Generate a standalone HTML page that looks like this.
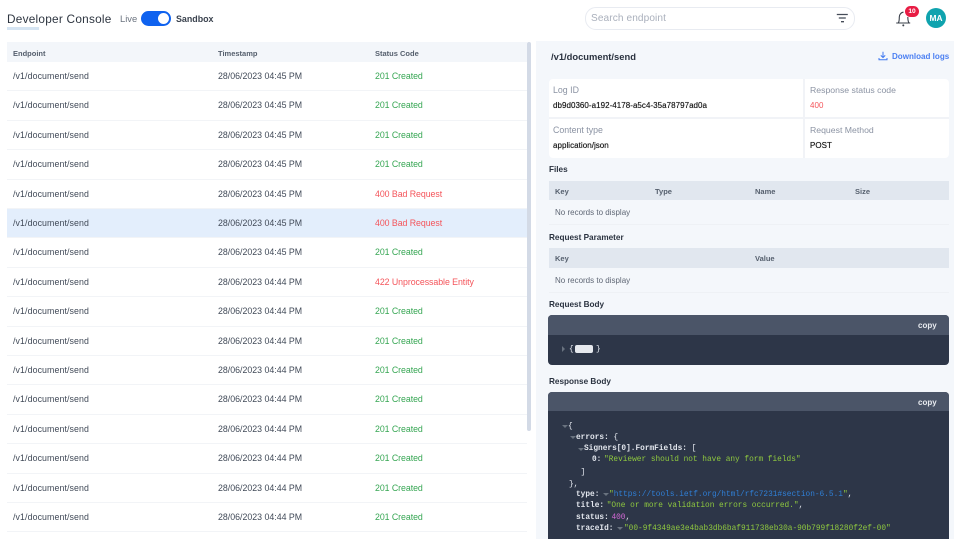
<!DOCTYPE html>
<html><head><meta charset="utf-8"><style>
html,body{margin:0;padding:0;width:954px;height:539px;overflow:hidden;background:#fff}
body{font-family:"Liberation Sans",sans-serif;position:relative;color:#333}
#w{position:absolute;left:0;top:0;width:954px;height:539px;overflow:hidden;filter:blur(.25px)}
.a,.t{position:absolute;white-space:nowrap}
.t{line-height:12px;height:12px}
.row{position:absolute;left:7px;width:520px;height:29.4px;border-bottom:1px solid #f2f4f7;box-sizing:border-box}
.row span{position:absolute;top:8.1px;line-height:12px;font-size:8.8px;color:#414a58;white-space:nowrap}
.row .e{left:6px;letter-spacing:.1px}.row .d{left:211px}.row .s{left:368px;letter-spacing:-.06px}
.g{color:#36a653!important}.r{color:#f4545a!important}
.h{font-size:7.5px;font-weight:bold;color:#555f6d}
.l{font-size:8.8px;color:#8b93a3}
.v{font-size:8px;color:#222;letter-spacing:.04px;text-shadow:0 0 .4px #222}
.sec{font-size:8.2px;font-weight:bold;color:#2b3340}
.c{font-family:"Liberation Mono",monospace;font-size:7.8px;line-height:11px;height:11px;color:#e5e9f0;position:absolute;white-space:nowrap}
.k{color:#e3e7ee;font-weight:bold}.str{color:#8fc93f;font-weight:normal}.u{color:#2f7fd6}.n{color:#d36ad6;font-weight:normal}
.p{font-weight:normal}.m{margin-left:-2px}
.tri{position:absolute;width:0;height:0;border-left:3px solid transparent;border-right:3px solid transparent;border-top:3px solid #69727f}
</style></head><body><div id="w">

<div class="t" style="left:7px;top:12.5px;font-size:11.8px;color:#2d3540;letter-spacing:.25px">Developer Console</div>
<div class="a" style="left:7px;top:27px;width:32px;height:3px;background:#d5e4f2"></div>
<div class="t" style="left:120px;top:12.5px;font-size:9.4px;color:#6c7480">Live</div>
<div class="a" style="left:141px;top:11px;width:30px;height:15px;border-radius:8px;background:#0f62ef"></div>
<div class="a" style="left:158px;top:13px;width:11px;height:11px;border-radius:50%;background:#fff"></div>
<div class="t" style="left:176px;top:12.5px;font-size:8.9px;font-weight:bold;color:#3a424e">Sandbox</div>

<div class="a" style="left:585px;top:7px;width:268px;height:21px;border:1px solid #e8ebf1;border-radius:11px;box-sizing:content-box"></div>
<div class="t" style="left:591px;top:13px;font-size:10.1px;color:#aab0bc;letter-spacing:.1px">Search endpoint</div>
<svg class="a" style="left:836px;top:13px" width="13" height="11" viewBox="0 0 13 11"><path d="M.8 1.5h11M2.8 5h7M5 8.7h3" stroke="#454c58" stroke-width="1.3" fill="none"/></svg>

<svg class="a" style="left:895px;top:9px" width="17" height="18" viewBox="0 0 17 18"><path d="M1.2 14h14M3.2 14c1.2-1.5 1-3.5 1.1-6 .1-2.5 2-4.8 4.2-4.8M12.8 8c.1 2.5.1 4.5 1.2 6" stroke="#3a404a" stroke-width="1.1" fill="none"/><circle cx="8.3" cy="16.4" r="1" fill="#3a404a"/></svg>
<div class="a" style="left:905px;top:6px;width:14px;height:11px;border-radius:6px;background:#e81c44;color:#fff;font-size:6.6px;font-weight:bold;line-height:11px;text-align:center">10</div>
<div class="a" style="left:926px;top:8px;width:20px;height:20px;border-radius:50%;background:#0fa3ae;color:#fff;font-size:8.4px;font-weight:bold;line-height:20px;text-align:center">MA</div>

<div class="a" style="left:7px;top:42px;width:520px;height:20px;background:#f3f6fa"></div>
<div class="t h" style="left:13px;top:47.5px">Endpoint</div>
<div class="t h" style="left:218px;top:47.5px">Timestamp</div>
<div class="t h" style="left:375px;top:47.5px">Status Code</div>

<div class="row" style="top:62px"><span class="e">/v1/document/send</span><span class="d">28/06/2023 04:45 PM</span><span class="s g">201 Created</span></div>
<div class="row" style="top:91.4px"><span class="e">/v1/document/send</span><span class="d">28/06/2023 04:45 PM</span><span class="s g">201 Created</span></div>
<div class="row" style="top:120.8px"><span class="e">/v1/document/send</span><span class="d">28/06/2023 04:45 PM</span><span class="s g">201 Created</span></div>
<div class="row" style="top:150.2px"><span class="e">/v1/document/send</span><span class="d">28/06/2023 04:45 PM</span><span class="s g">201 Created</span></div>
<div class="row" style="top:179.6px"><span class="e">/v1/document/send</span><span class="d">28/06/2023 04:45 PM</span><span class="s r">400 Bad Request</span></div>
<div class="row" style="top:209px;background:#e3eefc"><span class="e">/v1/document/send</span><span class="d">28/06/2023 04:45 PM</span><span class="s r">400 Bad Request</span></div>
<div class="row" style="top:238.4px"><span class="e">/v1/document/send</span><span class="d">28/06/2023 04:45 PM</span><span class="s g">201 Created</span></div>
<div class="row" style="top:267.8px"><span class="e">/v1/document/send</span><span class="d">28/06/2023 04:44 PM</span><span class="s r">422 Unprocessable Entity</span></div>
<div class="row" style="top:297.2px"><span class="e">/v1/document/send</span><span class="d">28/06/2023 04:44 PM</span><span class="s g">201 Created</span></div>
<div class="row" style="top:326.6px"><span class="e">/v1/document/send</span><span class="d">28/06/2023 04:44 PM</span><span class="s g">201 Created</span></div>
<div class="row" style="top:356px"><span class="e">/v1/document/send</span><span class="d">28/06/2023 04:44 PM</span><span class="s g">201 Created</span></div>
<div class="row" style="top:385.4px"><span class="e">/v1/document/send</span><span class="d">28/06/2023 04:44 PM</span><span class="s g">201 Created</span></div>
<div class="row" style="top:414.8px"><span class="e">/v1/document/send</span><span class="d">28/06/2023 04:44 PM</span><span class="s g">201 Created</span></div>
<div class="row" style="top:444.2px"><span class="e">/v1/document/send</span><span class="d">28/06/2023 04:44 PM</span><span class="s g">201 Created</span></div>
<div class="row" style="top:473.6px"><span class="e">/v1/document/send</span><span class="d">28/06/2023 04:44 PM</span><span class="s g">201 Created</span></div>
<div class="row" style="top:503px"><span class="e">/v1/document/send</span><span class="d">28/06/2023 04:44 PM</span><span class="s g">201 Created</span></div>

<div class="a" style="left:527px;top:42px;width:3.5px;height:389px;background:#d3dae6;border-radius:2px"></div>

<div class="a" style="left:536px;top:41px;width:418px;height:498px;background:#f4f7fb"></div>
<div class="t" style="left:551px;top:50.5px;font-size:9.4px;font-weight:bold;color:#2b3340">/v1/document/send</div>
<svg class="a" style="left:878px;top:51px" width="10" height="10" viewBox="0 0 10 10"><path d="M5 .8v5.6M2.8 4.4 5 6.6l2.2-2.2M1 7v1.8h8V7" stroke="#3f78f0" stroke-width="1" fill="none"/></svg>
<div class="t" style="left:892px;top:50.5px;font-size:8.05px;font-weight:bold;color:#4a7ff2">Download logs</div>

<div class="a" style="left:549px;top:79px;width:400px;height:79px;background:#fff;border-radius:4px"></div>
<div class="a" style="left:803px;top:79px;width:2px;height:79px;background:#f1f3f7"></div>
<div class="a" style="left:549px;top:117px;width:400px;height:2px;background:#f1f3f7"></div>
<div class="t l" style="left:553px;top:84px">Log ID</div>
<div class="t v" style="left:553px;top:100px">db9d0360-a192-4178-a5c4-35a78797ad0a</div>
<div class="t l" style="left:810px;top:84px;font-size:8.7px">Response status code</div>
<div class="t v r" style="left:810px;top:100px;text-shadow:none">400</div>
<div class="t l" style="left:553px;top:124px">Content type</div>
<div class="t v" style="left:553px;top:140px">application/json</div>
<div class="t l" style="left:810px;top:124px;font-size:8.7px">Request Method</div>
<div class="t v" style="left:810px;top:140px">POST</div>

<div class="t sec" style="left:549px;top:164px">Files</div>
<div class="a" style="left:549px;top:181px;width:400px;height:19px;background:#e1e7ef"></div>
<div class="t h" style="left:555px;top:186px">Key</div>
<div class="t h" style="left:655px;top:186px">Type</div>
<div class="t h" style="left:755px;top:186px">Name</div>
<div class="t h" style="left:855px;top:186px">Size</div>
<div class="t" style="left:555px;top:207px;font-size:8px;color:#5f6775">No records to display</div>
<div class="a" style="left:549px;top:224px;width:400px;height:1px;background:#eef1f5"></div>

<div class="t sec" style="left:549px;top:232px">Request Parameter</div>
<div class="a" style="left:549px;top:248px;width:400px;height:20px;background:#e1e7ef"></div>
<div class="t h" style="left:555px;top:253px">Key</div>
<div class="t h" style="left:755px;top:253px">Value</div>
<div class="t" style="left:555px;top:275px;font-size:8px;color:#5f6775">No records to display</div>
<div class="a" style="left:549px;top:292px;width:400px;height:1px;background:#eef1f5"></div>

<div class="t sec" style="left:549px;top:299px">Request Body</div>
<div class="a" style="left:548px;top:315px;width:401px;height:50px;background:#2d3648;border-radius:4px;overflow:hidden"><div style="height:20px;background:#4b5568"></div></div>
<div class="t" style="left:918px;top:320px;font-size:8px;font-weight:bold;color:#e8ebf0">copy</div>
<div class="a" style="left:562px;top:346px;width:0;height:0;border-top:3px solid transparent;border-bottom:3px solid transparent;border-left:3px solid #69727f"></div>
<div class="c" style="left:569px;top:345px">{</div>
<div class="a" style="left:575px;top:345px;width:18px;height:8px;background:#e6e9ee;border-radius:2px"></div>
<div class="c" style="left:596px;top:345px">}</div>

<div class="t sec" style="left:549px;top:376px">Response Body</div>
<div class="a" style="left:548px;top:392px;width:401px;height:147px;background:#2d3648;border-radius:4px 4px 0 0;overflow:hidden"><div style="height:19px;background:#4b5568"></div></div>
<div class="t" style="left:918px;top:397px;font-size:8px;font-weight:bold;color:#e8ebf0">copy</div>

<div class="tri" style="left:562px;top:425px"></div><div class="c" style="left:568px;top:422px">{</div>
<div class="tri" style="left:570px;top:436px"></div><div class="c k" style="left:576px;top:433px">errors:<span class="p"> {</span></div>
<div class="tri" style="left:578px;top:448px"></div><div class="c k" style="left:584px;top:444px">Signers[0].FormFields:<span class="p"> [</span></div>
<div class="c k" style="left:592px;top:455px">0:<span class="str m"> "Reviewer should not have any form fields"</span></div>
<div class="c" style="left:576px;top:468px">&nbsp;]</div>
<div class="c" style="left:569px;top:480px">},</div>
<div class="c k" style="left:576px;top:490px">type:</div><div class="tri" style="left:603px;top:493px"></div><div class="c" style="left:609px;top:490px"><span class="str">"</span><span class="u">https://tools.ietf.org/html/rfc7231#section-6.5.1</span><span class="str">"</span>,</div>
<div class="c k" style="left:576px;top:501px">title:<span class="str m"> "One or more validation errors occurred."</span><span class="p">,</span></div>
<div class="c k" style="left:576px;top:513px">status:<span class="n m"> 400</span><span class="p">,</span></div>
<div class="c k" style="left:576px;top:524px">traceId:</div><div class="tri" style="left:617px;top:527px"></div><div class="c str" style="left:624px;top:524px">"00-9f4349ae3e4bab3db6baf911738eb30a-90b799f18280f2ef-00"</div>

</div></body></html>
